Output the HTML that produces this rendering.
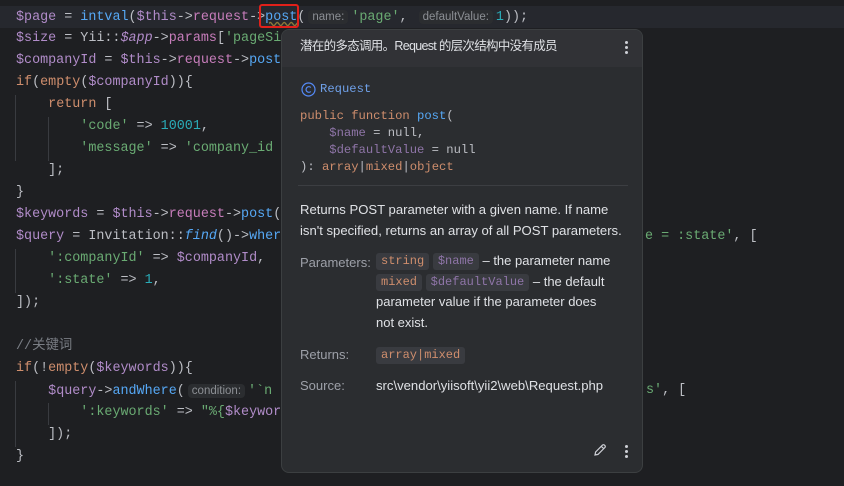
<!DOCTYPE html>
<html><head><meta charset="utf-8"><style>
body{margin:0;width:844px;height:486px;background:#1e1f22;overflow:hidden;position:relative;font-family:"Liberation Mono",monospace;}
.cl{position:absolute;left:16px;height:22px;line-height:22px;font-size:13.4px;color:#bcbec4;white-space:pre;}
.v{color:#b18cc9}.f{color:#56a8f5}.k{color:#cf8e6d}.s{color:#6aab73}.n{color:#2aacb8}.p{color:#c77dbb}.c{color:#7a7e85}.i{font-style:italic;color:#56a8f5}
.h{font-family:"Liberation Sans",sans-serif;font-size:11.5px;color:#8c8f94;background:#2b2d30;border-radius:4px;padding:1px 4px;margin:0 3px}
.g{position:absolute;width:1px;background:#393b40}
#pop{position:absolute;left:281px;top:29px;width:362px;height:444px;background:#2b2d30;border:1px solid #3c3f41;border-radius:8px;box-sizing:border-box;font-family:"Liberation Sans","Noto Sans CJK SC",sans-serif;color:#dfe1e5;overflow:hidden}
.t{position:absolute;white-space:pre}
.ch{display:inline-block;font-family:"Liberation Mono",monospace;font-size:12px;line-height:17px;background:#393b40;border-radius:3px;padding:0 5px;color:#cf8e6d;vertical-align:middle}
.cv{color:#8f75a8}
.dot{position:absolute;width:3px;height:3px;border-radius:2px;background:#ced0d6}
</style></head><body>
<div style="position:absolute;left:0;top:6px;width:844px;height:22px;background:#26282e"></div>
<div class="g" style="left:15px;top:95px;height:66px"></div>
<div class="g" style="left:48px;top:117px;height:44px"></div>
<div class="g" style="left:15px;top:249px;height:44px"></div>
<div class="g" style="left:15px;top:381px;height:66px"></div>
<div class="g" style="left:48px;top:403px;height:22px"></div>
<div class="cl" style="top:6px"><span class="v">$page</span> = <span class="f">intval</span>(<span class="v">$this</span>-&gt;<span class="p">request</span>-&gt;<span class="f" style="text-decoration:underline wavy #8a7a3a">post</span>(<span class="h">name:</span><span class="s">'page'</span>, <span class="h">defaultValue:</span><span class="n">1</span>));</div>
<div style="position:absolute;left:259px;top:4px;width:40px;height:24px;border:2px solid #e0201a;border-radius:3px;box-sizing:border-box"></div>
<div class="cl" style="top:28px"><span class="v">$size</span> = Yii::<span class="v" style="font-style:italic">$app</span>-&gt;<span class="p">params</span>[<span class="s">'pageSize'</span>]</div>
<div class="cl" style="top:50px"><span class="v">$companyId</span> = <span class="v">$this</span>-&gt;<span class="p">request</span>-&gt;<span class="f">post</span></div>
<div class="cl" style="top:72px"><span class="k">if</span>(<span class="k">empty</span>(<span class="v">$companyId</span>)){</div>
<div class="cl" style="top:94px">    <span class="k">return</span> [</div>
<div class="cl" style="top:116px">        <span class="s">'code'</span> =&gt; <span class="n">10001</span>,</div>
<div class="cl" style="top:138px">        <span class="s">'message'</span> =&gt; <span class="s">'company_id</span></div>
<div class="cl" style="top:160px">    ];</div>
<div class="cl" style="top:182px">}</div>
<div class="cl" style="top:204px"><span class="v">$keywords</span> = <span class="v">$this</span>-&gt;<span class="p">request</span>-&gt;<span class="f">post</span>(</div>
<div class="cl" style="top:226px"><span class="v">$query</span> = Invitation::<span class="i">find</span>()-&gt;<span class="f">where</span></div>
<div class="cl" style="top:226px;left:645px"><span class="s">e = :state'</span>, [</div>
<div class="cl" style="top:248px">    <span class="s">':companyId'</span> =&gt; <span class="v">$companyId</span>,</div>
<div class="cl" style="top:270px">    <span class="s">':state'</span> =&gt; <span class="n">1</span>,</div>
<div class="cl" style="top:292px">]);</div>
<div class="cl c" style="top:336px;font-family:'Liberation Mono','Noto Sans CJK SC',monospace">//关键词</div>
<div class="cl" style="top:358px"><span class="k">if</span>(!<span class="k">empty</span>(<span class="v">$keywords</span>)){</div>
<div class="cl" style="top:380px">    <span class="v">$query</span>-&gt;<span class="f">andWhere</span>(<span class="h">condition:</span><span class="s">'`n</span></div>
<div class="cl" style="top:380px;left:646px"><span class="s">s'</span>, [</div>
<div class="cl" style="top:402px">        <span class="s">':keywords'</span> =&gt; <span class="s">"%{</span><span class="v">$keywords</span></div>
<div class="cl" style="top:424px">    ]);</div>
<div class="cl" style="top:446px">}</div>

<div id="pop">
<div style="position:absolute;left:0;top:0;width:100%;height:37px;background:#313236"></div>
<div class="t" style="left:18px;top:8px;font-size:12.5px;line-height:17px;letter-spacing:-0.7px">潜在的多态调用。Request 的层次结构中没有成员</div>
<div class="dot" style="left:343px;top:11px"></div><div class="dot" style="left:343px;top:16px"></div><div class="dot" style="left:343px;top:21px"></div>
<svg style="position:absolute;left:19px;top:52px" width="15" height="15"><circle cx="7.5" cy="7.5" r="6.5" fill="none" stroke="#548af7" stroke-width="1.2"/><path d="M9.8 5.5A2.8 2.8 0 1 0 9.8 9.5" fill="none" stroke="#548af7" stroke-width="1.2"/></svg>
<div class="t" style="left:38px;top:51px;font-family:'Liberation Mono',monospace;font-size:12.2px;color:#6fa0e8;line-height:17px">Request</div>
<div class="t" style="left:18px;top:78px;font-family:'Liberation Mono',monospace;font-size:12.2px;line-height:17px;color:#bcbec4"><span class="k">public function</span> <span class="f">post</span>(
    <span class="cv">$name</span> = null,
    <span class="cv">$defaultValue</span> = null
): <span class="k">array</span>|<span class="k">mixed</span>|<span class="k">object</span></div>
<div style="position:absolute;left:16px;top:155px;width:330px;height:1px;background:#3c3e42"></div>
<div class="t" style="left:18px;top:169px;font-size:13.1px;line-height:21px">Returns POST parameter with a given name. If name
isn't specified, returns an array of all POST parameters.</div>
<div class="t" style="left:18px;top:222px;font-size:13px;color:#9da0a8;line-height:21px">Parameters:</div>
<div class="t" style="left:94px;top:221px;font-size:13px;line-height:20.6px"><span class="ch">string</span> <span class="ch cv">$name</span> – the parameter name
<span class="ch">mixed</span> <span class="ch cv">$defaultValue</span> – the default
parameter value if the parameter does
not exist.</div>
<div class="t" style="left:18px;top:314px;font-size:13px;color:#9da0a8;line-height:21px">Returns:</div>
<div class="t" style="left:94px;top:314px;font-size:13px;line-height:21px"><span class="ch">array|mixed</span></div>
<div class="t" style="left:18px;top:345px;font-size:13px;color:#9da0a8;line-height:21px">Source:</div>
<div class="t" style="left:94px;top:345px;font-size:13.1px;line-height:21px">src\vendor\yiisoft\yii2\web\Request.php</div>
<svg style="position:absolute;left:311px;top:413px" width="14" height="14"><path d="M2 12L2.6 9 9.5 2.1a1.3 1.3 0 0 1 1.9 0l.5.5a1.3 1.3 0 0 1 0 1.9L5 11.4Z M8.3 3.3l2.4 2.4" fill="none" stroke="#ced0d6" stroke-width="1.2"/></svg>
<div class="dot" style="left:343px;top:415px"></div><div class="dot" style="left:343px;top:420px"></div><div class="dot" style="left:343px;top:425px"></div>
</div>
</body></html>
